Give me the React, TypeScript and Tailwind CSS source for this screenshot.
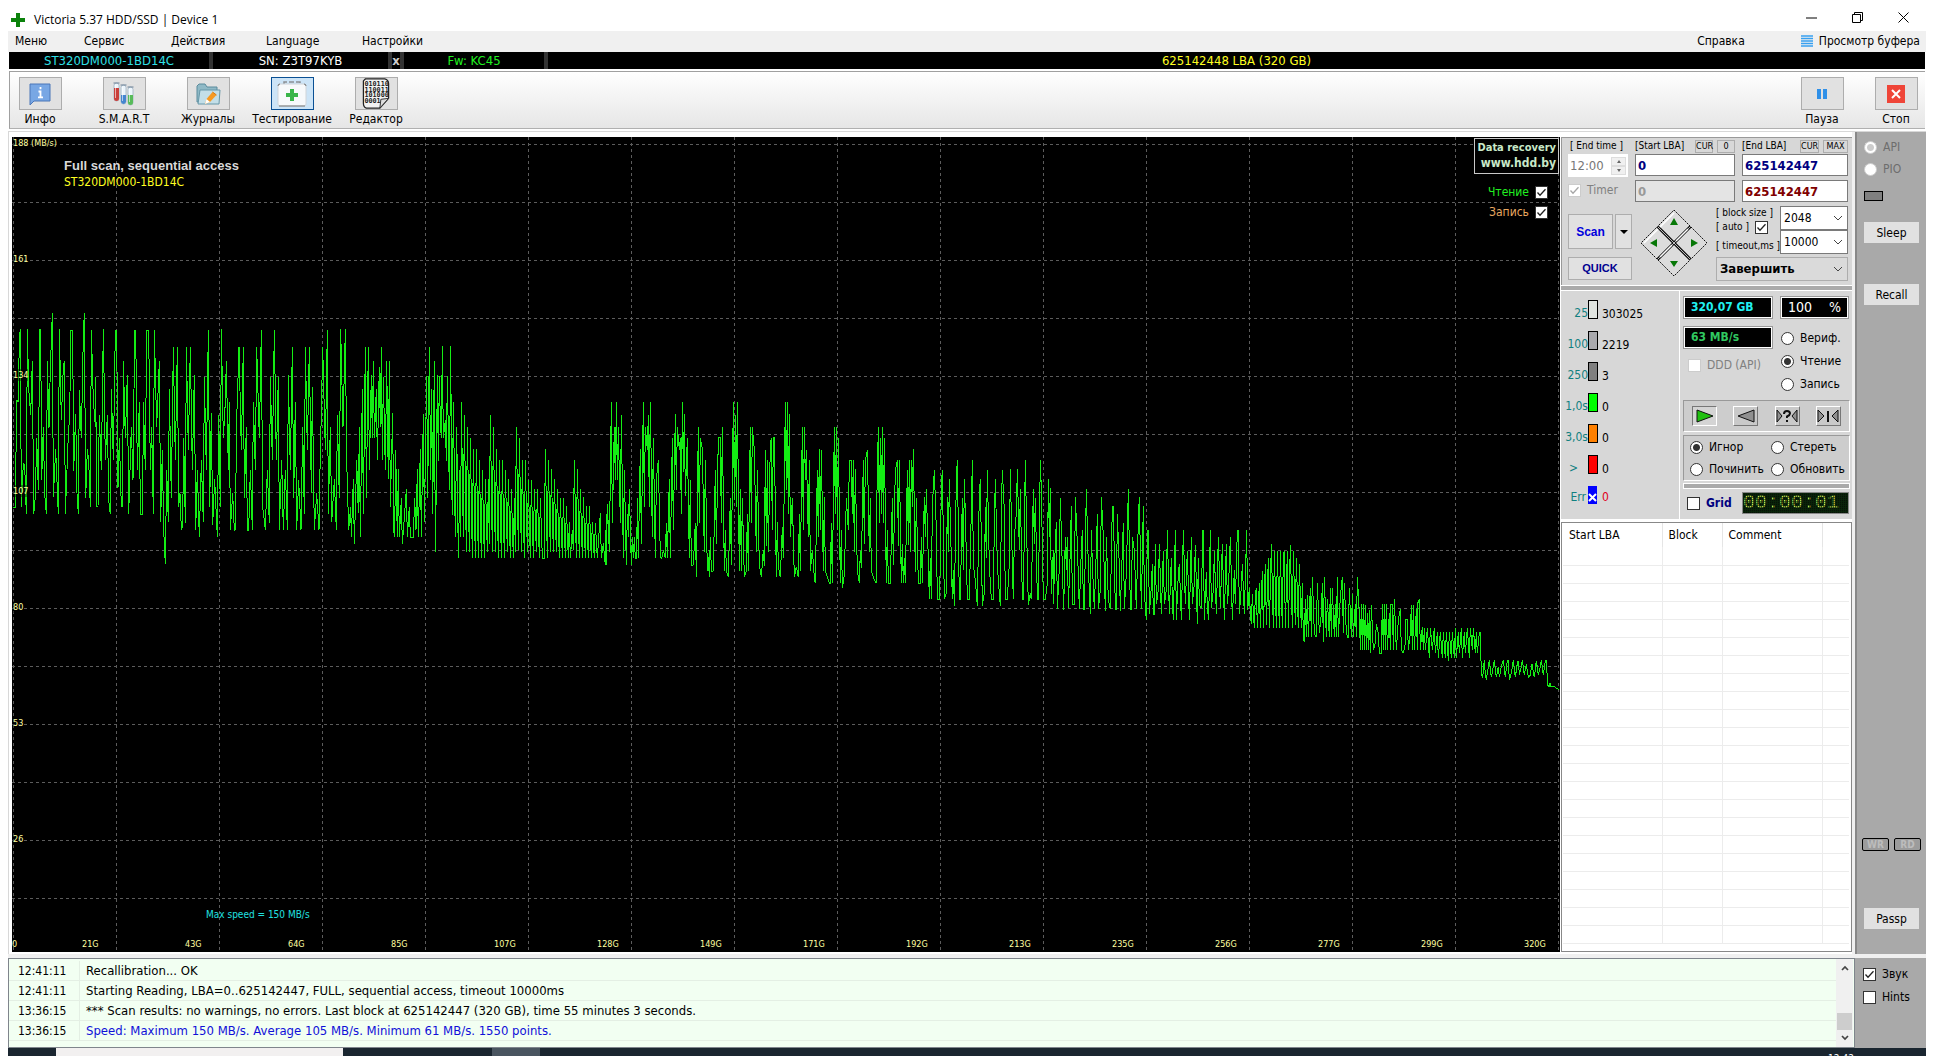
import type { ReactNode } from "react";

const UI = "font-['DejaVu_Sans_Condensed','DejaVu_Sans',sans-serif]";

// Read speed traces. Coordinates are in 1/3 px units, relative to the x/y origin of each part.
const TRACES = [
  {
    x: 0,
    y: 280,
    points:
      "40,683 46,683 50,360 55,365 58,175 61,148 64,680 70,550 74,555 79,703 82,148 86,325 92,405 97,243 101,703 106,650 110,475 115,630 119,148 122,148 125,600 130,442 134,640 139,703 142,243 147,445 151,265 157,98 160,652 167,508 175,703 178,148 184,420 190,260 193,243 196,703 204,490 209,400 213,150 218,150 221,572 227,402 231,640 235,703 238,330 244,475 250,165 253,98 257,655 262,508 266,540 271,680 274,150 280,360 286,440 287,290 290,680 294,680 298,405 304,570 310,148 316,540 322,405 326,660 331,703 334,328 340,540 346,150 350,150 354,625 358,475 364,680 368,680 370,243 376,475 382,285 386,703 394,440 399,600 404,150 407,150 412,570 418,365 421,703 428,703 430,367 436,570 440,150 446,150 451,570 455,440 460,703 463,150 470,440 478,243 482,727 487,510 491,750 496,853 500,570 505,727 508,328 514,655 520,200 526,540 532,202 536,680 540,640 544,750 548,735 551,475 556,730 559,200 565,510 571,200 577,570 583,285 587,750 592,570 598,772 604,540 610,727 613,290 619,570 625,150 629,680 634,400 638,735 644,598 652,772 656,405 661,680 664,148 670,475 676,365 679,243 685,570 688,367 691,750 698,640 703,750 706,750 710,420 717,200 724,510 730,200 733,655 739,440 742,750 746,750 751,570 757,750 760,367 766,570 770,200 778,475 784,150 788,680 796,750 802,570 808,730 811,290 817,540 823,150 829,540 835,290 838,750 845,540 850,750 856,570 862,750 865,285 871,570 877,200 881,655 886,367 890,750 896,600 903,750 908,440 913,703 916,200 922,510 928,202 934,640 937,320 943,750 950,640 957,750 961,510 964,405 968,200 976,510 982,150 985,703 991,440 995,727 1003,598 1009,750 1012,405 1018,655 1022,148 1029,440 1036,148 1040,540 1046,750 1052,680 1054,772 1060,598 1063,793 1070,540 1075,700 1078,440 1081,772 1087,328 1090,703 1096,200 1099,655 1105,200 1108,570 1114,285 1117,475 1120,243 1123,475 1129,328 1132,540 1138,260 1141,442 1144,200 1147,540 1150,290 1156,570 1160,243 1165,598 1168,243 1171,680 1178,400 1181,750 1184,772 1187,510 1192,772 1195,568 1198,772 1204,655 1207,793 1214,700 1219,628 1222,772 1228,680 1231,772 1240,772 1244,655 1248,750 1252,568 1255,772 1261,508 1264,772 1270,402 1273,727 1280,288 1283,655 1288,202 1292,600 1295,328 1298,703 1303,243 1306,815 1309,608",
  },
  {
    x: 420,
    y: 320,
    points:
      "46,695 49,488 52,165 55,422 58,168 61,300 64,355 67,78 70,355 76,300 79,422 82,168 88,510 92,78 95,490 97,585 100,247 106,652 110,320 115,715 120,450 122,652 124,247 130,652 133,285 139,695 142,320 148,695 151,353 157,715 160,387 166,715 169,387 175,715 178,420 184,715 187,450 193,715 196,477 202,695 205,477 208,672 211,285 217,695 220,320 226,695 229,387 235,715 238,420 244,715 247,420 253,715 256,450 262,695 265,477 271,715 274,507 280,715 283,535 286,695 289,320 295,690 298,353 304,695 307,420 313,715 316,420 322,695 325,480 331,715 334,480 340,715 343,507 349,695 352,507 358,715 361,533 367,715 373,715 376,387 382,715 385,420 391,695 394,447 400,695 403,477 409,695 412,507 418,715 421,533 427,715 430,533 436,715 439,558 445,715 448,605 451,715 457,630 460,690 463,420 469,715 472,447 478,715 481,507 487,715 490,530 496,715 499,558 505,715 508,558 514,715 517,605 523,715 526,608 532,715 541,580 544,715 550,670 556,735 559,582 559,735 562,552 568,695 574,247 577,608 583,322 586,480 589,247 592,480 595,322 601,608 604,285 610,715 613,450 619,735 622,582 625,650 628,508 634,735 637,652 640,715 643,652 646,715 650,715 652,535 655,715 661,387 664,672 670,247 673,560 676,322 682,390 685,285 688,560 691,247 697,652 700,353 706,715 709,480 715,420 721,710 725,715 730,690 736,715 739,608 742,715 748,477 751,715 757,353 760,630 766,283 769,510 772,322 778,390 781,353 784,583 787,247 790,455 793,283 796,527 802,353 808,715 811,480 814,735 820,735 826,608 829,772 835,322 838,608 841,353 847,387 853,695 856,420 862,753 865,710 868,772 871,652 874,753 880,753 886,450 889,672 895,353 901,353 904,608 907,322 913,753 916,630 919,753 925,772 931,535 934,735 940,247 943,540 946,285 949,560 952,247 958,753 961,507 964,753 967,535 973,772 979,753 982,583 985,753 991,322 994,608 997,322 1003,390 1009,695 1012,450 1018,735 1024,772 1030,690 1033,738 1036,390 1039,678 1042,420 1045,695 1051,375 1054,353 1057,630 1060,353 1063,353 1069,772 1072,605 1075,740 1081,772 1087,620 1090,715 1096,247 1099,510 1102,247 1105,583 1108,283 1111,652 1117,535 1123,772 1129,740 1135,772 1138,583 1141,753 1147,322 1150,630 1153,322 1156,480 1159,390 1165,652 1168,420 1171,753 1177,690 1183,772 1186,790 1192,450 1195,652 1198,387 1201,630 1204,390 1210,753 1213,530 1216,753 1222,772 1228,790 1231,790 1234,608 1237,790 1243,322 1246,583 1249,322 1252,630 1255,355 1261,790 1264,630 1267,805 1273,765 1279,535 1285,630 1288,420 1294,420 1297,583 1300,420 1303,695 1306,447 1312,753 1318,790 1321,693 1324,745 1330,420 1333,672 1336,420 1342,390 1348,695 1351,535 1354,753 1360,772 1369,790 1369,605 1375,322 1378,608 1381,353 1384,583 1387,322 1390,608 1393,353 1399,790 1402,630 1405,790 1411,790 1417,535 1420,735 1426,450 1432,420 1435,678 1438,420",
  },
  {
    x: 860,
    y: 400,
    points:
      "118,180 124,550 127,432 130,550 133,475 136,550 142,210 145,435 148,180 151,455 154,180 157,320 160,148 166,515 169,293 175,550 181,550 184,410 187,550 193,290 196,410 199,267 205,480 208,598 211,475 214,598 217,320 223,210 229,390 232,598 238,598 241,495 244,255 247,210 253,598 259,580 262,290 265,455 268,237 277,598 280,510 283,617 289,240 292,180 298,598 301,598 307,293 310,510 313,237 316,340 322,598 328,598 334,330 337,180 340,495 346,540 352,617 358,280 361,237 367,617 373,580 376,320 379,475 382,210 388,495 394,598 400,598 403,370 406,237 412,495 418,580 421,617 424,335 427,210 433,330 436,598 442,598 448,490 451,207 457,495 460,598 463,410 469,340 472,207 478,450 481,267 487,598 490,598 496,180 502,495 505,615 511,580 514,598 520,267 523,432 526,293 532,598 535,598 541,180 544,267 550,598 556,598 562,550 565,237 568,410 571,263 574,582 580,450 580,613 586,430 589,367 592,628 598,500 601,293 607,500 611,630 616,410 619,510 622,410 625,625 631,450 634,318 637,613 643,613 646,290 652,430 658,628 664,450 667,390 670,628 673,628 679,267 685,500 691,643 694,390 697,490 703,628 709,450 712,342 715,628 721,570 724,290 730,410 736,632 739,410 745,600 751,628 757,318 760,318 766,628 769,628 772,342 778,500 781,632 787,450 790,370 793,628 799,520 805,267 811,628 814,628 817,410 823,450 829,628 835,360 838,290 844,628 850,318 853,580 859,660 862,390 865,390 868,643 874,560 877,492 880,643 883,643 886,432 889,613 895,570 898,432 904,643 910,453 913,613 919,570 922,390 928,643 934,475 937,600 940,660 946,390 949,660 955,520 958,492 964,660 970,390 976,613 982,453 988,660 994,410 997,613 1003,550 1006,435 1012,672 1015,475 1018,613 1024,625 1028,390 1030,390 1033,660 1039,515 1042,625 1046,660 1051,390 1054,625 1060,570 1063,453 1069,643 1075,410 1081,625 1087,432 1093,660 1099,432 1102,613 1105,575 1111,410 1117,660 1123,510 1126,613 1132,390 1135,390 1138,643 1144,560 1147,492 1153,643 1160,390",
  },
  {
    x: 1220,
    y: 480,
    points:
      "80,150 83,390 88,325 91,403 94,433 97,343 103,445 106,343 109,325 112,445 118,310 121,445 127,273 130,445 136,252 139,435 145,235 148,445 154,193 160,445 163,213 169,445 172,213 178,445 181,213 187,445 190,220 193,213 196,445 202,213 205,445 211,195 217,445 220,213 226,435 229,235 235,445 238,252 244,445 247,310 250,475 253,485 256,357 259,472 262,345 265,472 271,325 274,472 277,290 283,460 289,472 292,310 298,460 304,403 307,310 310,485 313,290 319,472 322,357 328,472 331,325 334,472 337,325 343,472 346,372 349,472 352,290 355,472 361,350 367,290 370,460 373,310 379,460 385,475 388,325 394,472 397,343 400,472 406,372 409,472 412,290 418,400 421,510 424,373 427,510 430,373 433,510 436,375 439,510 442,400 445,510 448,390 451,520 454,375 460,510 466,490 469,433 475,460 478,520 484,520 487,373 490,510 493,373 496,510 499,373 502,510 508,400 511,510 511,373 517,373 520,510 523,357 529,510 535,420 541,387 544,510 550,520 556,490 556,417 562,417 565,510 571,460 574,375 577,510 580,375 583,510 589,387 592,510 592,373 598,357 601,510 607,440 610,510 613,443 616,510 622,445 628,533 631,443 637,510 643,443 646,520 652,457 655,533 661,457 667,533 670,457 676,533 679,457 685,542 688,457 694,533 697,457 703,533 706,445 709,533 715,457 718,520 724,445 727,533 733,457 736,520 742,445 748,533 751,443 757,510 760,443 766,520 769,457 772,520 778,457 781,457 784,585 788,592 793,540 796,585 799,600 805,560 808,540 814,592 820,560 823,540 829,592 835,560 838,592 844,560 850,540 856,592 862,540 865,540 868,600 874,580 880,540 886,592 892,550 895,542 898,585 904,560 907,540 913,585 919,552 925,592 931,585 936,552 943,592 949,542 955,585 961,560 964,540 970,585 976,542 979,540 983,615 988,622 990,610 993,620 1000,618 1010,625 1018,630",
  },
];

const SPEEDS = ["188 (MB/s)", "161", "134", "107", "80", "53", "26"];
const SIZES = ["21G", "43G", "64G", "85G", "107G", "128G", "149G", "171G", "192G", "213G", "235G", "256G", "277G", "299G", "320G"];

const BLOCKS = [
  { label: "25", color: "bg-[#e0e4e0]", count: "303025" },
  { label: "100", color: "bg-[#a9a9ad]", count: "2219" },
  { label: "250", color: "bg-[#808080]", count: "3" },
  { label: "1,0s", color: "bg-[#00ff00]", count: "0" },
  { label: "3,0s", color: "bg-[#ff8000]", count: "0" },
  { label: ">", color: "bg-[#ff0000]", count: "0" },
];

const LOG = [
  { time: "12:41:11", text: "Recallibration... OK" },
  { time: "12:41:11", text: "Starting Reading, LBA=0..625142447, FULL, sequential access, timeout 10000ms" },
  { time: "13:36:15", text: "*** Scan results: no warnings, no errors. Last block at 625142447 (320 GB), time 55 minutes 3 seconds." },
  { time: "13:36:15", text: "Speed: Maximum 150 MB/s. Average 105 MB/s. Minimum 61 MB/s. 1550 points.", blue: true },
];

function Check({ label, checked, disabled, before, className = "" }: { label: ReactNode; checked?: boolean; disabled?: boolean; before?: boolean; className?: string }) {
  return (
    <label className={`flex items-center gap-1.5 ${before ? "flex-row-reverse" : ""} ${className}`}>
      <span className="relative block size-[13px] shrink-0">
        <input
          type="checkbox"
          defaultChecked={checked}
          disabled={disabled}
          className="peer block size-[13px] appearance-none border border-[#333] bg-white disabled:border-[#ccc]"
        />
        <svg viewBox="0 0 13 13" className="pointer-events-none absolute inset-0 hidden peer-checked:block peer-disabled:opacity-40">
          <path d="M2.5 6.5 5 9.2l5.5-6" fill="none" stroke="#222" strokeWidth="1.3" />
        </svg>
      </span>
      {label}
    </label>
  );
}

function Radio({ name, label, checked, disabled }: { name: string; label: string; checked?: boolean; disabled?: boolean }) {
  return (
    <label className={`flex items-center gap-1.5 whitespace-nowrap ${disabled ? "text-[#6d6d6d]" : ""}`}>
      <input
        type="radio"
        name={name}
        defaultChecked={checked}
        disabled={disabled}
        className="size-[13px] shrink-0 appearance-none rounded-full border border-[#333] bg-white checked:bg-[radial-gradient(circle,#333_0_3px,#fff_4px)] disabled:border-[#ccc] disabled:checked:bg-[radial-gradient(circle,#ccc_0_3px,#fff_4px)]"
      />
      {label}
    </label>
  );
}

function Combo({ label, value, className }: { label: string; value: string; className: string }) {
  return (
    <span className={`relative block border border-[#7a7a7a] ${className}`}>
      <select aria-label={label} className="block h-full w-full appearance-none pl-[3px]">
        <option>{value}</option>
      </select>
      <svg viewBox="0 0 10 6" className="pointer-events-none absolute top-2 right-1 w-[10px]">
        <path d="m1 1 4 4 4-4" fill="none" stroke="#444" />
      </svg>
    </span>
  );
}

function ToolButton({ label, active, wide, children }: { label: string; active?: boolean; wide?: boolean; children: ReactNode }) {
  return (
    <div className={`flex shrink-0 flex-col items-center ${wide ? "w-[74px]" : "w-[84px]"}`}>
      <button
        type="button"
        aria-label={label}
        className={`flex h-[33px] w-[43px] shrink-0 items-center justify-center border ${active ? "border-[#0a5094] bg-[#cce4f7]" : "border-[#adadad] bg-[#e1e1e1]"}`}
      >
        {children}
      </button>
      <span className="leading-[18px]">{label}</span>
    </div>
  );
}

function InfoIcon() {
  return (
    <svg viewBox="0 0 24 24" className="size-6">
      <path d="M2 2h20v17H6l-4 4z" fill="#78a7e4" stroke="#4a76b8" />
      <path d="M12.500 5v2.200M10.500 9.500h2v5.500M10 15.300h5" stroke="#fff" strokeWidth="1.800" fill="none" />
    </svg>
  );
}

function TubesIcon() {
  return (
    <svg viewBox="0 0 24 26" className="h-[26px] w-6">
      {[
        { x: 2, y: 2, h: 18, f: 7, c: "#c93f3a" },
        { x: 9, y: 4, h: 19, f: 14, c: "#4686cf" },
        { x: 16, y: 6, h: 18, f: 14, c: "#58bb5a" },
      ].map((t) => (
        <g key={t.x}>
          <rect x={t.x} y={t.y} width="5" height={t.h} rx="2.500" fill="#edf5fb" stroke="#9db1c2" strokeWidth=".8" />
          <path d={`M${t.x} ${t.f}h5V${t.y + t.h - 2.5}a2.500 2.500 0 0 1-5 0z`} fill={t.c} />
          <path d={`M${t.x + 1.5} ${t.y + 2}v${t.h - 5}`} stroke="#fff" strokeOpacity=".6" />
          <path d={`M${t.x - 0.5} ${t.y}h6`} stroke="#6d8196" />
        </g>
      ))}
    </svg>
  );
}

function JournalIcon() {
  return (
    <svg viewBox="0 0 26 24" className="h-6 w-[26px]">
      <path d="M2 20V4l2-2h6l2 3h10v15z" fill="#8fb9c6" stroke="#5b8b9c" />
      <path d="M3 22 5 8h20l-1 14z" fill="#c3dfe8" stroke="#6797a8" />
      <path d="m10 22 1.500-5 6-7 4 3-6.500 7z" fill="#f59a23" />
      <path d="m10 22 1.500-5 3.500 3z" fill="#fff" />
      <path d="m17.500 10 4 3" stroke="#d97a10" />
    </svg>
  );
}

function KitIcon() {
  return (
    <svg viewBox="0 0 32 28" className="h-7 w-8">
      <path d="M8 4V2h16v2" fill="none" stroke="#8b8f94" strokeWidth="1.500" strokeDasharray="5 2" />
      <rect x="2" y="4" width="28" height="22" rx="2" fill="#f7f9fb" stroke="#cfd4d9" />
      <path d="M2 6q0-2 2-2M30 6q0-2-2-2M3 26h26" stroke="#777" fill="none" />
      <path d="M14 9h4v4h4v4h-4v4h-4v-4h-4v-4h4z" fill="#39b54a" />
    </svg>
  );
}

function BinaryIcon() {
  return (
    <svg viewBox="0 0 30 32" className="h-[31px] w-[30px]">
      <path d="M4 1h20q4 1 4 5v15l-9 10H5q-3-1-3-5V3z" fill="#f2f2f2" stroke="#222" strokeWidth="1.300" />
      <g className="font-['DejaVu_Sans_Mono',monospace] text-[7px] font-bold" fill="#222">
        <text x="3" y="8">010110</text>
        <text x="3" y="14">110011</text>
        <text x="3" y="20">101000</text>
        <text x="3" y="26">0001</text>
      </g>
      <path d="m19 31 1-9 8-1z" fill="#ddd" stroke="#333" />
    </svg>
  );
}

function Chart() {
  return (
    <div className="relative min-w-0 flex-1 overflow-hidden bg-black text-[9px]">
      <svg viewBox="12 137 1548 815" preserveAspectRatio="none" className="absolute inset-0 h-full w-full" shapeRendering="crispEdges">
        <g stroke="#5c5c5c" strokeDasharray="3 3">
          {Array.from({ length: 16 }, (_, i) => (
            <path key={i} d={`M${13.5 + i * 103} 137V952`} />
          ))}
          {Array.from({ length: 14 }, (_, i) => (
            <path key={i} d={`M12 ${144.5 + i * 58}H1560`} />
          ))}
        </g>
        {TRACES.map((t) => (
          <g key={t.x} transform={`translate(${t.x} ${t.y}) scale(${1 / 3})`}>
            <polyline points={t.points} fill="none" stroke="#14ee14" strokeWidth="3" strokeLinejoin="bevel" />
          </g>
        ))}
      </svg>
      {SPEEDS.map((s, i) => (
        <span key={s} className="absolute left-0 -translate-y-1/2 bg-black/40 pl-px leading-3 text-[#ffffa0]" style={{ top: `${((6 + i * 116) / 815) * 100}%` }}>
          {s}
        </span>
      ))}
      <div className="absolute inset-x-0 bottom-0 flex pr-0.5 pl-px leading-4 text-[#ffffa0]">
        <span className="absolute left-0">0</span>
        {SIZES.map((s) => (
          <span key={s} className="flex flex-1 justify-end">
            <span className="w-[34px]">{s}</span>
          </span>
        ))}
      </div>
      <div className="absolute top-[21px] left-[52px]">
        <p className="font-['Liberation_Sans',Arial,sans-serif] text-[13px] leading-4 font-bold text-[#d8d8d8]">Full scan, sequential access</p>
        <p className="text-xs leading-4 text-[#ffff20]">ST320DM000-1BD14C</p>
      </div>
      <p className="absolute bottom-[29px] left-[194px] text-[10px] leading-4 text-[#20e0e0]">Max speed = 150 MB/s</p>
      <div className="absolute top-px right-px flex flex-col items-end text-xs">
        <a href="#hdd" className="border border-[#c8c8c8] bg-black px-0.5 text-right leading-[14px] font-bold text-[#c8e8c8]">
          <span className="block pt-0.5 text-[11px]">Data recovery</span>
          <span className="block pb-0.5 text-xs">www.hdd.by</span>
        </a>
        <div className="flex flex-col items-end gap-1 pt-[10px] pr-[11px]">
          <Check before checked label="Чтение" className="leading-4 text-[#20f020]" />
          <Check before checked label="Запись" className="leading-4 text-[#e8a860]" />
        </div>
      </div>
    </div>
  );
}

function NavPad() {
  return (
    <svg viewBox="0 0 66 66" className="size-[66px]" role="img" aria-label="Navigation">
      <path d="M33 0 66 33 33 66 0 33z" fill="#dcdcdc" stroke="#111" strokeDasharray="2 1" />
      <path d="M16.500 16.500 49.500 49.500M49.500 16.500 16.500 49.500" stroke="#111" strokeWidth="3" />
      <path d="M16.500 16.500 49.500 49.500M49.500 16.500 16.500 49.500" stroke="#bbb" strokeWidth="1" />
      <path d="M3 33 17 19M19 17 33 3M19 47 31 35M35 31 47 19" stroke="#fff" strokeWidth="1.500" />
      <path d="m33 8 4 7h-8zM33 57l-4-6h8zM9 33l7-4v8zM57 33l-7-4v8z" fill="#087808" />
    </svg>
  );
}

function ScanPanel() {
  const tiny = "h-[13px] border border-[#adadad] bg-[#d8d8d8] text-[9px] leading-[11px]";
  const field = "block h-[22px] w-full border border-[#7a7a7a] px-0.5 text-[13px] font-bold";
  return (
    <section className="flex h-[148px] flex-col border-t border-l border-[#999] bg-[#d7d7d7] pr-1 pl-1.5">
      <div className="grid grid-cols-[60px_100px_106px] gap-x-[7px] text-[10px]">
        <div>
          <label htmlFor="endTime" className="block h-4 pl-0.5 leading-4">[ End time ]</label>
          <div className="flex h-[23px] items-center bg-white pr-0.5 text-[13px] text-[#777]">
            <input id="endTime" disabled defaultValue="12:00" className="w-10 flex-1 pl-0.5" />
            <span className="flex flex-col">
              {["M4 1 6 4H2z", "M4 4 6 1H2z"].map((d) => (
                <button key={d} type="button" disabled aria-label="Step" className="flex h-[9px] w-[15px] items-center justify-center border border-[#ddd] bg-[#f0f0f0]">
                  <svg viewBox="0 0 8 5" className="w-2"><path d={d} fill="#666" /></svg>
                </button>
              ))}
            </span>
          </div>
          <Check disabled checked label="Timer" className="pt-[5px] text-xs leading-4 text-[#808080]" />
        </div>
        <div>
          <div className="flex h-4 items-center justify-between leading-4">
            <label htmlFor="startLba">[Start LBA]</label>
            <span className="flex gap-1">
              <button type="button" className={`w-[18px] ${tiny}`}>CUR</button>
              <button type="button" className={`w-[18px] ${tiny}`}>0</button>
            </span>
          </div>
          <input id="startLba" defaultValue="0" className={`${field} bg-white text-[#000080]`} />
          <input aria-label="Start position" disabled defaultValue="0" className={`${field} mt-1 bg-[#e4e4e4] text-[#999]`} />
        </div>
        <div>
          <div className="flex h-4 items-center justify-between leading-4">
            <label htmlFor="endLba">[End LBA]</label>
            <span className="flex gap-1">
              <button type="button" className={`w-[19px] ${tiny}`}>CUR</button>
              <button type="button" className={`w-[25px] ${tiny}`}>MAX</button>
            </span>
          </div>
          <input id="endLba" defaultValue="625142447" className={`${field} bg-white text-[#000080]`} />
          <input aria-label="End position" defaultValue="625142447" className={`${field} mt-1 bg-white text-[#800000]`} />
        </div>
      </div>
      <div className="flex justify-between pt-1">
        <div className="flex w-16 flex-col gap-2 pt-2 font-['Liberation_Sans',Arial,sans-serif] font-bold">
          <div className="flex gap-0.5">
            <button type="button" className="h-[35px] flex-1 border border-[#adadad] bg-[#e1e1e1] text-xs text-[#0000dd]">Scan</button>
            <button type="button" aria-label="Scan options" className="flex w-[17px] items-center justify-center border border-[#adadad] bg-[#e1e1e1]">
              <svg viewBox="0 0 8 4" className="w-2"><path d="M0 0h8L4 4z" /></svg>
            </button>
          </div>
          <button type="button" className="h-[23px] border border-[#adadad] bg-[#e1e1e1] text-[11px] text-[#000090]">QUICK</button>
        </div>
        <div className="pt-1"><NavPad /></div>
        <div className="flex w-[132px] flex-col">
          <div className="flex justify-between">
            <div className="flex flex-col text-[10px] whitespace-nowrap">
              <span className="leading-[13px]">[ block size ]</span>
              <Check before checked label="[ auto ]" className="justify-end leading-4" />
              <span className="pt-[3px] leading-4">[ timeout,ms ]</span>
            </div>
            <div className="w-[68px] text-xs">
              <Combo label="Block size" value="2048" className="h-6 bg-white" />
              <Combo label="Timeout" value="10000" className="h-6 bg-white" />
            </div>
          </div>
          <Combo label="On finish" value="Завершить" className="mt-[3px] h-6 border-[#adadad] bg-[#dadada] text-[13px] font-bold" />
        </div>
      </div>
    </section>
  );
}

function Transport({ label, pressed, children }: { label: string; pressed?: boolean; children: ReactNode }) {
  return (
    <button type="button" aria-label={label} className={`flex h-5 w-[25px] items-center justify-center border ${pressed ? "border-t-[#777] border-r-white border-b-white border-l-[#777] bg-[#d4d4d4]" : "border-t-white border-r-[#777] border-b-[#777] border-l-white bg-[#c9c9c9]"}`}>
      <svg viewBox="0 0 22 16" className="h-4 w-[22px]" stroke="#111">{children}</svg>
    </button>
  );
}

function StatusPanel() {
  const lcd = "border border-white bg-black outline outline-[#999] px-1.5";
  return (
    <section className="flex h-[228px] bg-[#d7d7d7]">
      <div className="w-[119px] border-r border-white pt-[9px] text-xs">
        {BLOCKS.map((b) => (
          <div key={b.label} className="flex h-[31px] items-start">
            <span className={`w-[27px] pt-1.5 text-right leading-[15px] text-[#108080] ${b.label === ">" ? "pr-2.5" : ""}`}>{b.label}</span>
            <span className={`h-[19px] w-[10px] border border-black ${b.color}`} />
            <span className="pt-[7px] pl-1 leading-[15px]">{b.count}</span>
          </div>
        ))}
        <div className="flex items-start">
          <span className="w-[25px] pt-1 text-right leading-[15px] text-[#108080]">Err</span>
          <svg viewBox="0 0 9 18" className="ml-0.5 h-[18px] w-[9px]">
            <path d="M0 0h9v18H0z" fill="#00f" />
            <path d="m1 8 7 7M8 8l-7 7" stroke="#fff" strokeWidth="2" />
          </svg>
          <span className="pt-1 pl-[5px] leading-[15px] text-[#e00020]">0</span>
        </div>
      </div>
      <div className="flex flex-1 flex-col pt-1.5 pr-0.5 pl-[3px] text-xs">
        <div className="grid grid-cols-[88px_67px] justify-between pr-0.5 pl-px">
          <div className="flex flex-col gap-[9px]">
            <output className={`h-[21px] leading-[19px] font-bold text-[#20f0f0] ${lcd}`}>320,07 GB</output>
            <output className={`h-[21px] leading-[19px] font-bold text-[#30c860] ${lcd}`}>63 MB/s</output>
            <Check disabled label="DDD (API)" className="pl-1 text-[#808080]" />
          </div>
          <div className="flex flex-col">
            <output className={`flex h-[21px] justify-between text-sm leading-[19px] text-white ${lcd}`}>
              <span>100</span>
              <span>%</span>
            </output>
            <div className="flex flex-col gap-[5px] pt-[11px] leading-[18px]">
              <Radio name="mode" label="Вериф." />
              <Radio name="mode" label="Чтение" checked />
              <Radio name="mode" label="Запись" />
            </div>
          </div>
        </div>
        <div className="mt-[7px] flex h-8 items-center justify-between border border-t-[#999] border-r-white border-b-white border-l-[#999] bg-[#cdcdcd] px-2">
          <Transport label="Forward" pressed><path d="M3 2v12l16-6z" fill="#20c010" /></Transport>
          <Transport label="Backward"><path d="M19 2v12L3 8z" fill="#909090" /></Transport>
          <Transport label="Random">
            <path d="M1 2v12l5-6zM21 2v12l-5-6z" fill="#909090" />
            <path d="M8 6q0-3 3-3t3 2.500q0 1.500-3 3V10M11 12v2" fill="none" strokeWidth="2" />
          </Transport>
          <Transport label="Butterfly">
            <path d="M1 2v12l6-6zM21 2v12l-6-6z" fill="#909090" />
            <path d="M11 3v11" strokeWidth="2" />
          </Transport>
        </div>
        <div className="mt-[3px] grid h-[46px] grid-cols-[81px_1fr] content-center gap-y-1 border border-t-[#999] border-r-white border-b-white border-l-[#999] bg-[#cdcdcd] pl-1.5 leading-[18px]">
          <Radio name="action" label="Игнор" checked />
          <Radio name="action" label="Стереть" />
          <Radio name="action" label="Починить" />
          <Radio name="action" label="Обновить" />
        </div>
        <div className="mt-0.5 h-[6px] border border-white bg-[#aaa]" />
        <div className="flex items-center justify-between pt-[3px] pr-px pl-1">
          <Check label="Grid" className="text-xs font-bold text-[#000080]" />
          <time className="relative h-[22px] w-[107px] border border-[#888] bg-[#061206] font-['Liberation_Mono',monospace] text-[20px] leading-[20px] text-[#d0e850]">
            00:00:01
            <span className="absolute inset-0 bg-[linear-gradient(#0a280a99_1px,transparent_1px),linear-gradient(90deg,#0a280aaa_1px,transparent_1px)] bg-[size:2px_2px]" />
          </time>
        </div>
      </div>
    </section>
  );
}

function DefectTable() {
  return (
    <div className="mt-[3px] flex-1 overflow-hidden border border-[#888] bg-white pr-0.5 pl-px">
      <table className="w-full table-fixed border-collapse text-xs">
        <thead>
          <tr className="h-6 text-left [&>th]:border-r [&>th]:border-[#e5e5e5] [&>th]:px-1.5 [&>th]:font-normal">
            <th className="w-[99px]">Start LBA</th>
            <th className="w-[60px]">Block</th>
            <th className="w-[100px]">Comment</th>
            <th className="border-r-0!" />
          </tr>
        </thead>
        <tbody>
          {Array.from({ length: 22 }, (_, i) => (
            <tr key={i} className="h-[18px] border-b border-[#ececec] [&>td]:border-r [&>td]:border-[#ececec] [&>td]:p-0">
              <td />
              <td />
              <td />
              <td className="border-r-0!" />
            </tr>
          ))}
        </tbody>
      </table>
    </div>
  );
}

function SideStrip() {
  const btn = "h-[21px] w-[55px] bg-[#e1e1e1]";
  return (
    <aside className="flex w-[71px] shrink-0 flex-col border-l-2 border-[#888] bg-[#a9a9a9] pb-[25px] pl-[7px] text-xs">
      <div className="flex flex-col gap-1 pt-1.5 leading-[18px]">
        <Radio name="bus" label="API" checked disabled />
        <Radio name="bus" label="PIO" disabled />
      </div>
      <div className="mt-[13px] h-[10px] w-[19px] border border-black bg-[#808080]" />
      <button type="button" className={`mt-[21px] ${btn}`}>Sleep</button>
      <button type="button" className={`mt-[41px] ${btn}`}>Recall</button>
      <div className="mt-auto mb-[57px] -ml-0.5 flex gap-[5px] text-[10px] leading-[11px] font-bold text-[#bdbdbd]">
        <span className="w-[27px] rounded-xs border border-black bg-[#9c9c9c] text-center">WR</span>
        <span className="w-[27px] rounded-xs border border-black bg-[#9c9c9c] text-center">RD</span>
      </div>
      <button type="button" className={btn}>Passp</button>
    </aside>
  );
}

export default function App() {
  return (
    <div className={`flex min-h-screen flex-col overflow-hidden bg-white pr-[10px] pl-2 text-xs text-black ${UI}`}>
      <header className="flex h-[31px] items-center pr-[17px] pl-[3px]">
        <svg viewBox="0 0 14 14" className="mt-2 size-[14px]"><path d="M5 0h4v5h5v4H9v5H5V9H0V5h5z" fill="#0b820b" /></svg>
        <h1 className="pt-2 pl-[9px] font-['Open_Sans','Noto_Sans',sans-serif] text-xs">Victoria 5.37 HDD/SSD | Device 1</h1>
        <div className="ml-auto flex gap-[35px] pt-1">
          <button type="button" aria-label="Minimize"><svg viewBox="0 0 11 11" className="size-[11px]"><path d="M0 6h11" stroke="#000" /></svg></button>
          <button type="button" aria-label="Restore"><svg viewBox="0 0 11 11" className="size-[11px]"><path d="M.5 2.500h8v8h-8zM2.500 2V.5h8v8H9" fill="none" stroke="#000" /></svg></button>
          <button type="button" aria-label="Close"><svg viewBox="0 0 11 11" className="size-[11px]"><path d="m.5.5 10 10m0-10-10 10" stroke="#000" /></svg></button>
        </div>
      </header>

      <nav className="flex h-[21px] items-center bg-[#f0f0f0] pr-1.5 pb-0.5 pl-[7px]">
        <button type="button" className="w-[69px] text-left">Меню</button>
        <button type="button" className="w-[87px] text-left">Сервис</button>
        <button type="button" className="w-[95px] text-left">Действия</button>
        <button type="button" className="w-24 text-left">Language</button>
        <button type="button">Настройки</button>
        <button type="button" className="ml-auto">Справка</button>
        <button type="button" className="ml-14 flex items-center gap-1.5">
          <svg viewBox="0 0 12 12" className="size-3"><path d="M0 1h12M0 3.500h12M0 6h12M0 8.500h12M0 11h12" stroke="#38a0f0" strokeWidth="1.500" /></svg>
          Просмотр буфера
        </button>
      </nav>

      <div className="mx-px flex h-[17px] divide-x-4 divide-[#333] bg-black text-center text-[13px] leading-[17px]">
        <span className="w-[204px] text-[#30e0e8]">ST320DM000-1BD14C</span>
        <span className="w-[179px] text-white">SN: Z3T97KYB</span>
        <button type="button" className="w-3 font-bold text-[#ccc]">x</button>
        <span className="w-36 text-[#20f020]">Fw: KC45</span>
        <span className="flex-1 text-[#ffff20]">625142448 LBA (320 GB)</span>
      </div>

      <div className="mx-px mt-0.5 flex h-[58px] justify-between border-t border-l border-[#a0a0a0] border-b border-b-[#b0b0b0] bg-linear-to-b from-white to-[#e6e6e6] pt-[5px]">
        <div className="-ml-3 flex">
          <ToolButton label="Инфо"><InfoIcon /></ToolButton>
          <ToolButton label="S.M.A.R.T"><TubesIcon /></ToolButton>
          <ToolButton label="Журналы"><JournalIcon /></ToolButton>
          <ToolButton label="Тестирование" active><KitIcon /></ToolButton>
          <ToolButton label="Редактор"><BinaryIcon /></ToolButton>
        </div>
        <div className="-mr-2 flex">
          <ToolButton wide label="Пауза"><svg viewBox="0 0 10 10" className="size-[10px]"><path d="M0 0h4v10H0zM6 0h4v10H6z" fill="#2f90e8" /></svg></ToolButton>
          <ToolButton wide label="Стоп">
            <svg viewBox="0 0 18 18" className="size-[18px]"><path d="M0 0h18v18H0z" fill="#ef4538" /><path d="m5 5 8 8m0-8-8 8" stroke="#fff" strokeWidth="2" /></svg>
          </ToolButton>
        </div>
      </div>

      <main className="mt-0.5 flex flex-1 border-t border-[#d8d8d8]">
        <div className="flex min-w-0 flex-1 border-l border-[#d8d8d8] pt-[5px] pb-0.5 pl-[3px]">
          <Chart />
          <div className="ml-px flex w-[291px] shrink-0 flex-col">
            <ScanPanel />
            <div className="my-px h-1 bg-[#aaa]" />
            <StatusPanel />
            <DefectTable />
          </div>
        </div>
        <div className="w-[3px] shrink-0 bg-[#f0f0f0]" />
        <SideStrip />
      </main>

      <div className="h-1 bg-[#f0f0f0]" />

      <div className="flex h-[90px]">
        <div className="flex flex-1 border border-[#7f858c] bg-[#f2fff2]">
          <ul className="flex-1 pt-0.5">
            {LOG.map((l, i) => (
              <li key={i} className="flex h-5 items-center border-b border-[#e4efe4]">
                <time className="w-[71px] self-stretch border-r border-[#e4efe4] pl-[9px] leading-5">{l.time}</time>
                <span className={`pl-1.5 text-[13px] ${l.blue ? "text-[#1010d8]" : ""}`}>{l.text}</span>
              </li>
            ))}
          </ul>
          <div className="mr-px flex w-[17px] flex-col items-center bg-[#f0f0f0] py-1.5">
            <svg viewBox="0 0 8 6" className="w-2"><path d="m1 5 3-3 3 3" fill="none" stroke="#444" strokeWidth="1.700" /></svg>
            <span className="mt-auto mb-[5px] h-[17px] w-[15px] bg-[#cdcdcd]" />
            <svg viewBox="0 0 8 6" className="w-2"><path d="m1 1 3 3 3-3" fill="none" stroke="#444" strokeWidth="1.700" /></svg>
          </div>
        </div>
        <div className="flex w-[71px] flex-col gap-[5px] bg-[#a9a9a9] pt-[7px] pl-2 leading-[18px]">
          <Check label="Звук" checked />
          <Check label="Hints" />
        </div>
      </div>

      <footer className="flex h-2 overflow-hidden bg-[#1a2630]">
        <div className="ml-12 w-[287px] bg-[#f2f0f0]" />
        <div className="ml-[149px] w-12 bg-[#4a5560]" />
        <time className="mr-[72px] ml-auto pt-[3px] text-[10px] leading-4 text-white">12:42</time>
      </footer>
    </div>
  );
}
